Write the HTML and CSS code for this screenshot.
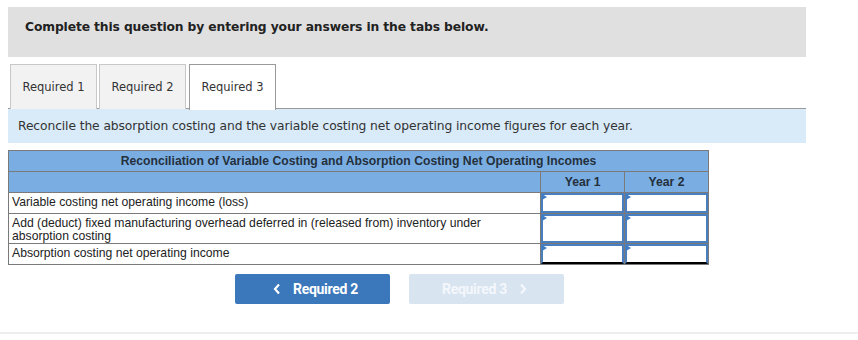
FILE: index.html
```html
<!DOCTYPE html>
<html lang="en">
<head>
    <meta charset="UTF-8">
    <title>Required 3</title>
    <link rel="stylesheet" href="styles.css">
</head>
<body>
    <div class="page">
        <div class="instructions">
            <p>Complete this question by entering your answers in the tabs below.</p>
        </div>

        <ul class="tabs">
            <li class="tab">Required 1</li>
            <li class="tab">Required 2</li>
            <li class="tab active">Required 3</li>
        </ul>

        <div class="prompt">
            Reconcile the absorption costing and the variable costing net operating income figures for each year.
        </div>

        <table class="recon">
            <tr class="title-row">
                <th colspan="3">Reconciliation of Variable Costing and Absorption Costing Net Operating Incomes</th>
            </tr>
            <tr class="year-row">
                <th class="label-col"></th>
                <th class="year">Year 1</th>
                <th class="year">Year 2</th>
            </tr>
            <tr class="row-short">
                <td class="label">Variable costing net operating income (loss)</td>
                <td class="entry"><div class="input"></div></td>
                <td class="entry"><div class="input"></div></td>
            </tr>
            <tr class="row-tall">
                <td class="label">Add (deduct) fixed manufacturing overhead deferred in (released from) inventory under absorption costing</td>
                <td class="entry"><div class="input"></div></td>
                <td class="entry"><div class="input"></div></td>
            </tr>
            <tr class="row-short total">
                <td class="label">Absorption costing net operating income</td>
                <td class="entry"><div class="input"></div></td>
                <td class="entry"><div class="input"></div></td>
            </tr>
        </table>

        <div class="nav-buttons">
            <button class="btn btn-prev">
                <svg class="chev" viewBox="0 0 8 12" width="8" height="12"><path d="M6 1.5 L2 6 L6 10.5" fill="none" stroke="currentColor" stroke-width="2.2"/></svg>
                Required 2
            </button>
            <button class="btn btn-next" disabled>
                Required 3
                <svg class="chev" viewBox="0 0 8 12" width="8" height="12"><path d="M2 1.5 L6 6 L2 10.5" fill="none" stroke="currentColor" stroke-width="2.2"/></svg>
            </button>
        </div>
    </div>
    <div class="footer-line"></div>
</body>
</html>
```

FILE: styles.css
```css
* {
    margin: 0;
    padding: 0;
    box-sizing: border-box;
}

body {
    font-family: "DejaVu Sans", Verdana, sans-serif;
    color: #222;
    background-color: #fff;
}

.page {
    width: 798px;
    margin: 7px 0 0 8px;
}

/* Instructions banner */
.instructions {
    background-color: #e0e0e0;
    height: 50px;
    padding: 13px 0 0 17px;
}

.instructions p {
    font-size: 12.3px;
    font-weight: bold;
    letter-spacing: -0.12px;
}

/* Tabs */
.tabs {
    display: flex;
    list-style: none;
    margin-top: 7px;
    padding-left: 2px;
    gap: 2px;
    border-bottom: 1px solid #9a9a9a;
    height: 45px;
}

.tab {
    width: 87px;
    height: 45px;
    background-color: #f2f2f2;
    border: 1px solid #c8c8c8;
    border-bottom: none;
    font-size: 11.5px;
    color: #333;
    text-align: center;
    line-height: 44px;
}

.tab.active {
    background-color: #fff;
    border-color: #9a9a9a;
    margin-left: 1px;
    position: relative;
    z-index: 1;
    height: 46px;
}

/* Prompt */
.prompt {
    background-color: #d9ebf9;
    height: 34px;
    padding: 10px 0 0 10px;
    font-size: 12.3px;
    color: #333;
    letter-spacing: -0.1px;
}

/* Reconciliation table */
.recon {
    margin-top: 7px;
    width: 701px;
    border-collapse: collapse;
    font-family: "Liberation Sans", Arial, sans-serif;
    font-size: 12.2px;
    color: #222;
}

.recon th {
    background-color: #7aaee3;
    border: 1px solid #7a7a7a;
    font-weight: bold;
    height: 21px;
    color: #24303c;
}

.recon .label-col {
    width: 533px;
}

.recon .year {
    width: 84px;
}

.recon td {
    border: 1px solid #7a7a7a;
}

.recon .label {
    padding: 3px 30px 0 3px;
    line-height: 13px;
    vertical-align: top;
}

.row-short {
    height: 21px;
}

.row-tall {
    height: 30px;
}

.recon .entry {
    padding: 0;
}

.input {
    position: relative;
    border: 2px solid #4a7fbf;
    background-color: #fff;
}

.row-tall .input {
    height: 29px;
}

.row-short .input {
    height: 20px;
}

.input::before {
    content: "";
    position: absolute;
    left: -1px;
    top: -1px;
    border-left: 5px solid #3f7cc4;
    border-top: 3px solid transparent;
    border-bottom: 3px solid transparent;
}

.total .input {
    border-bottom: 2px solid #000;
}

/* Navigation buttons */
.nav-buttons {
    display: flex;
    gap: 19px;
    margin: 9px 0 0 227px;
}

.btn {
    display: flex;
    align-items: center;
    justify-content: center;
    gap: 12px;
    width: 155px;
    height: 30px;
    border: none;
    border-radius: 2px;
    font-family: Roboto, "Liberation Sans", sans-serif;
    font-weight: bold;
    font-size: 14px;
    letter-spacing: -0.3px;
    color: #fff;
}

.btn-prev {
    background-color: #3a77bb;
    padding-left: 6px;
}

.btn-next {
    background-color: #d9e4f1;
    color: #f4f7fb;
    padding-right: 4px;
}

.chev {
    display: block;
}

.footer-line {
    margin-top: 28px;
    height: 2px;
    background-color: #eeeeee;
}
```
